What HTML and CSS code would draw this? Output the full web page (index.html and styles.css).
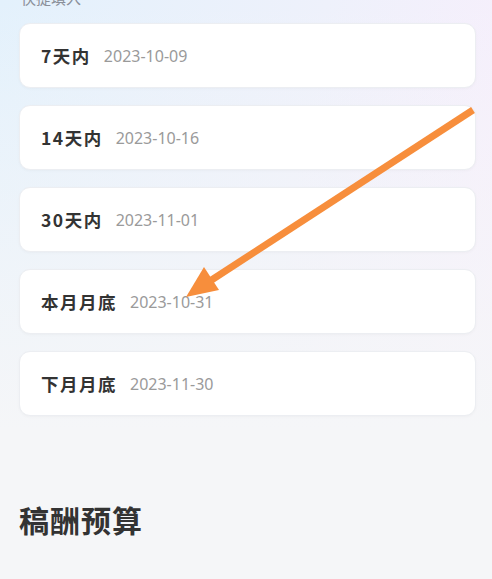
FILE: index.html
```html
<!DOCTYPE html>
<html>

<head>
    <meta name="viewport" content="width=device-width, initial-scale=1, user-scalable=no">
    <title>截稿时间</title>
    <link rel="stylesheet" href="styles.css">
</head>

<body>
    <div id="container">
        <p class="section-tip">快捷填入</p>

        <ul class="date-options">
            <li class="date-option">
                <span class="option-label">7天内</span>
                <span class="option-date">2023-10-09</span>
            </li>
            <li class="date-option">
                <span class="option-label">14天内</span>
                <span class="option-date">2023-10-16</span>
            </li>
            <li class="date-option">
                <span class="option-label">30天内</span>
                <span class="option-date">2023-11-01</span>
            </li>
            <li class="date-option">
                <span class="option-label">本月月底</span>
                <span class="option-date">2023-10-31</span>
            </li>
            <li class="date-option">
                <span class="option-label">下月月底</span>
                <span class="option-date">2023-11-30</span>
            </li>
        </ul>

        <h2 class="section-title">稿酬预算</h2>

        <!-- annotation arrow drawn over the screenshot -->
        <svg class="annotation" width="492" height="579" viewBox="0 0 492 579">
            <line x1="473" y1="110" x2="210" y2="281" stroke="#f78e3c" stroke-width="7" stroke-linecap="butt" />
            <polygon points="186,297 219,290 204,267" fill="#f78e3c" />
        </svg>
    </div>
</body>

</html>
```

FILE: styles.css
```css
html,
body {
    margin: 0;
    height: 100%;
}

body {
    overflow: hidden;
    font-family: "Noto Sans CJK SC", "Noto Sans", sans-serif;
    background:
        linear-gradient(180deg, rgba(245, 246, 248, 0) 0px, #f5f6f8 430px),
        linear-gradient(100deg, #e3f1fc 0%, #eef1fb 55%, #f9eefc 100%);
    background-color: #f5f6f8;
}

#container {
    position: relative;
    display: flow-root;
    height: 100vh;
    padding: 0 16px 0 19px;
    box-sizing: border-box;
}

.section-tip {
    margin: -12px 0 0 2px;
    font-size: 15px;
    line-height: 20px;
    color: #8a8f99;
}

.date-options {
    list-style: none;
    margin: 15px 0 0;
    padding: 0;
    display: flex;
    flex-direction: column;
    gap: 17px;
}

.date-option {
    display: flex;
    align-items: center;
    height: 65px;
    box-sizing: border-box;
    padding: 0 21px 0 21px;
    background: #fff;
    border: 1px solid #eceef2;
    border-radius: 11px;
    box-shadow: 0 1px 3px rgba(0, 0, 0, 0.03);
}

.option-label {
    font-size: 17.5px;
    font-weight: bold;
    letter-spacing: 1.5px;
    color: #333;
    margin-right: 13px;
}

.option-date {
    font-family: "Noto Sans", sans-serif;
    font-size: 16px;
    color: #9a9a9a;
}

.section-title {
    margin: 83px 0 0 0;
    font-size: 30px;
    font-weight: bold;
    letter-spacing: 1px;
    color: #333;
    line-height: 40px;
}

.annotation {
    position: absolute;
    left: 0;
    top: 0;
    pointer-events: none;
}
```
